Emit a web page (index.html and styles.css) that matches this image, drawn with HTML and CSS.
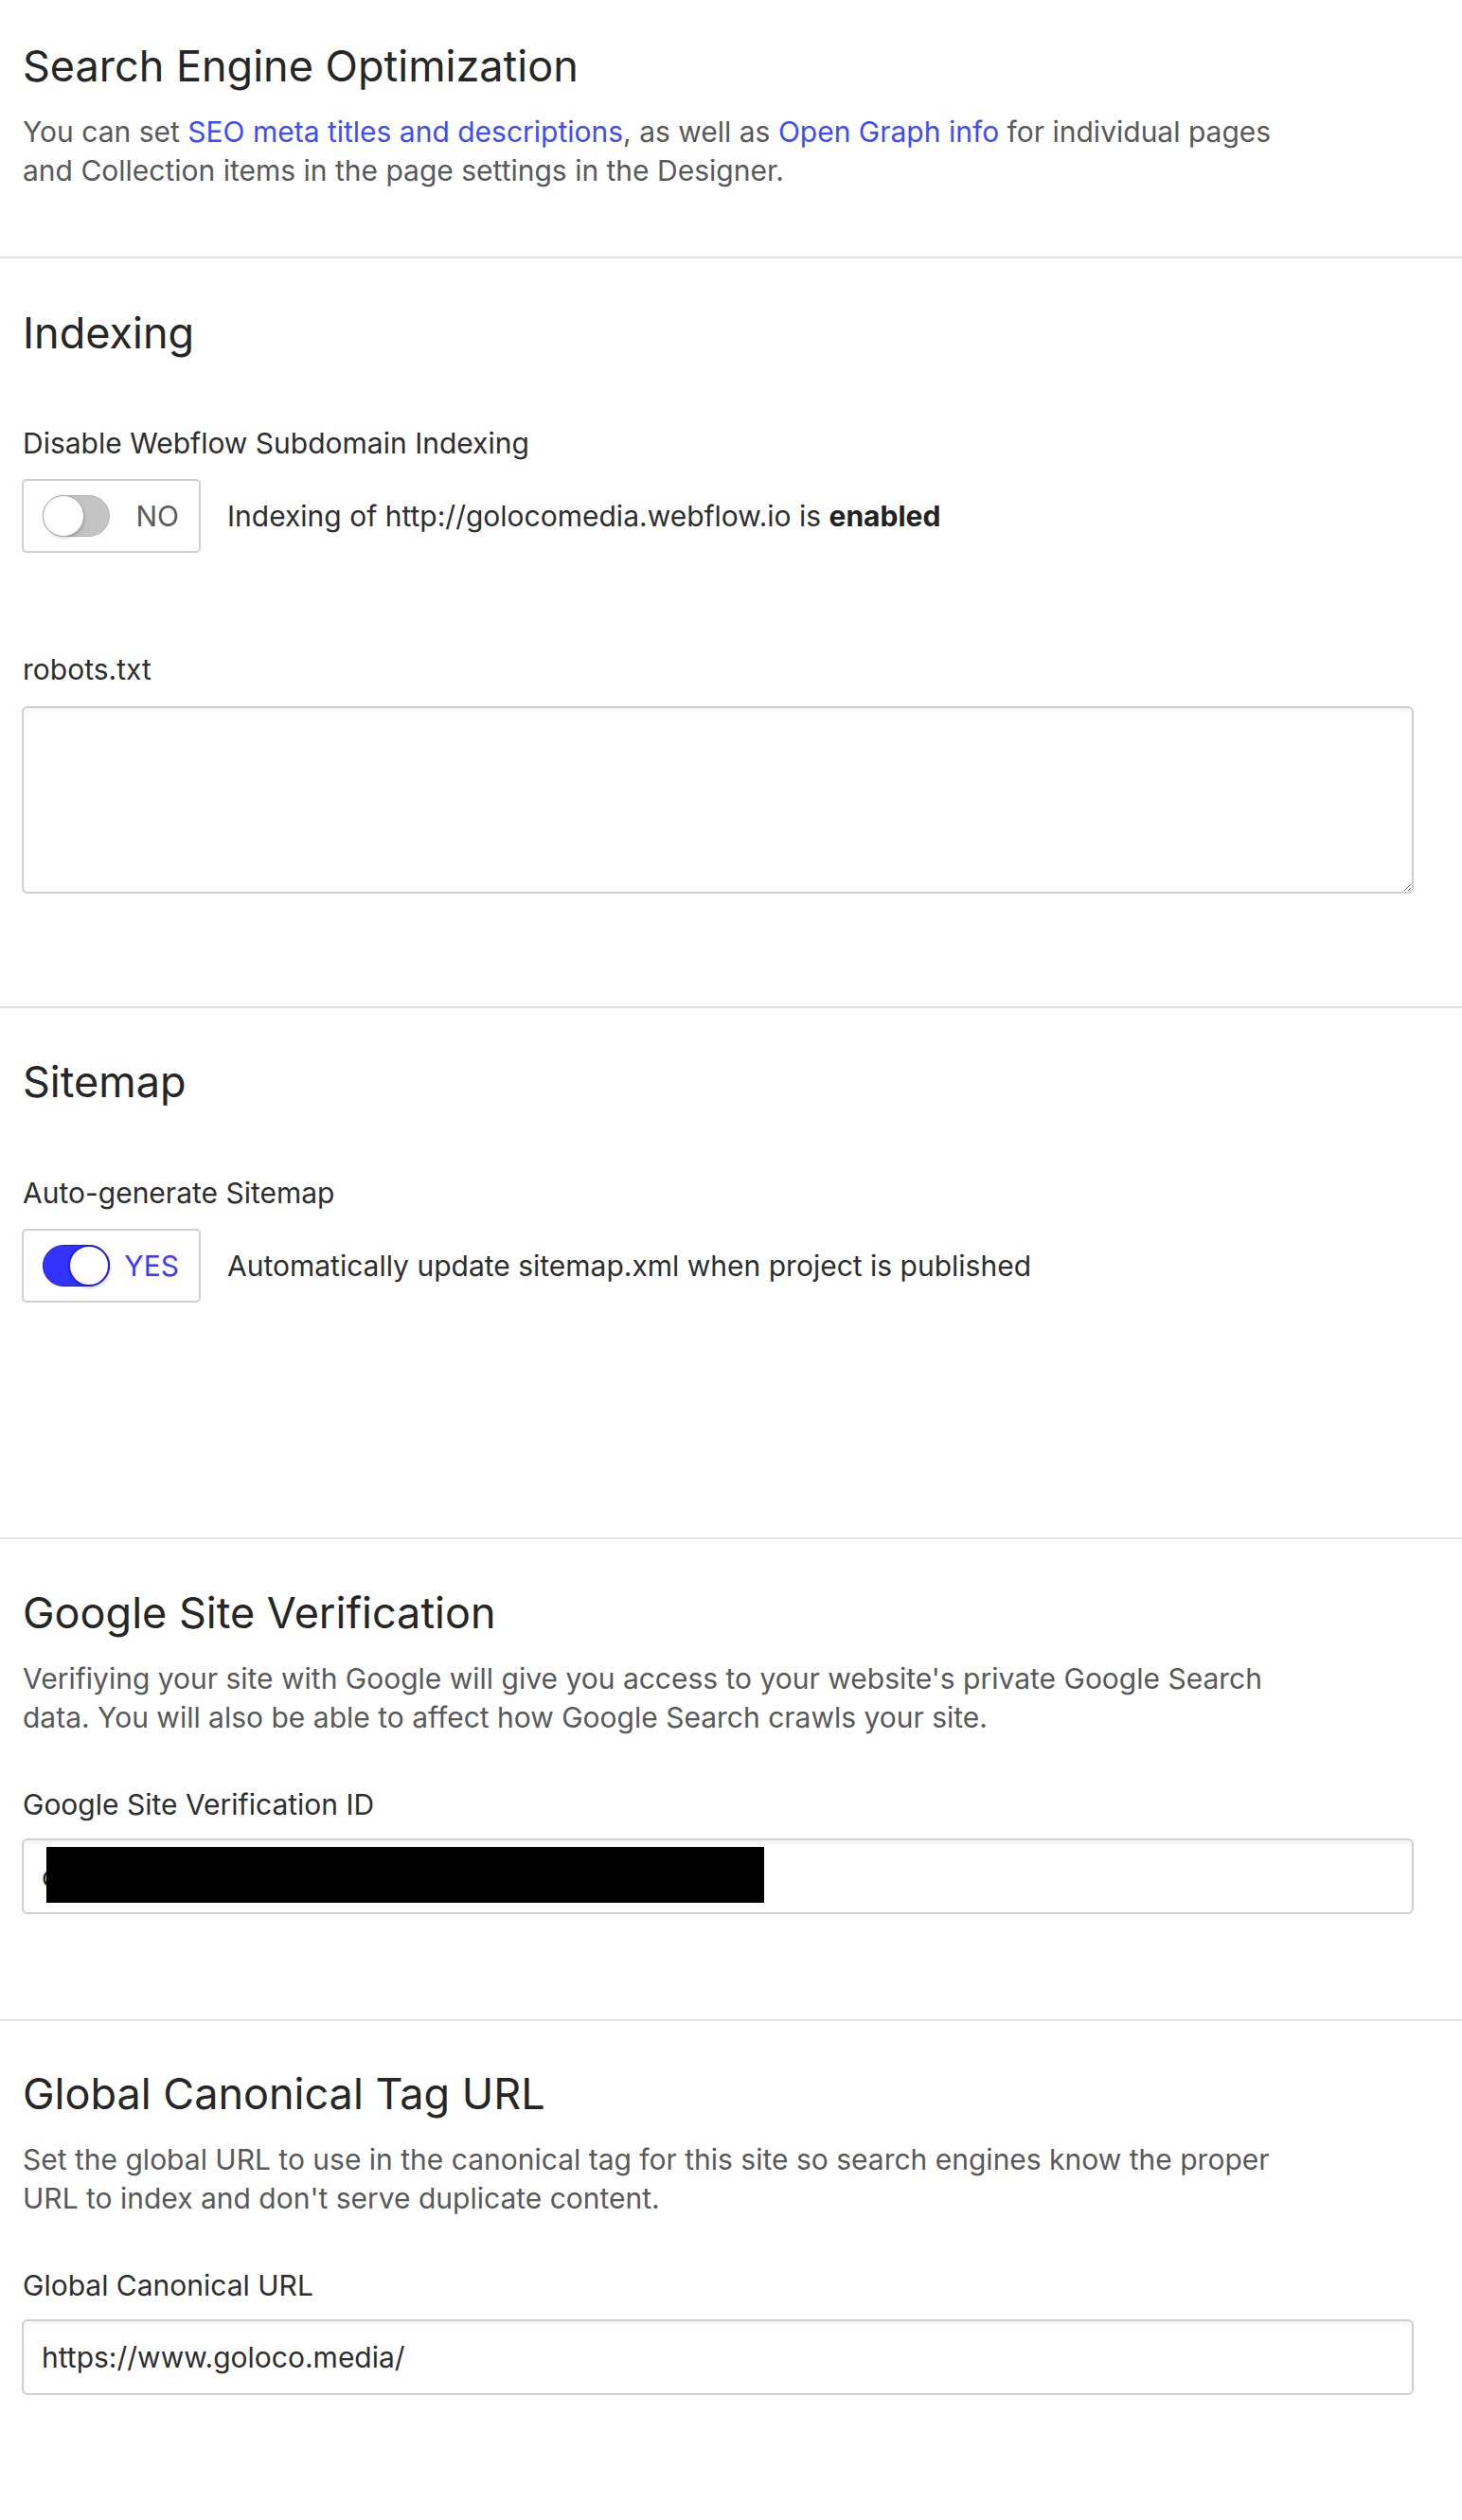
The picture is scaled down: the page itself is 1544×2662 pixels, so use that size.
FILE: index.html
```html
<!DOCTYPE html>
<html lang="en">
<head>
<meta charset="utf-8">
<title>SEO Settings</title>
<link rel="stylesheet" href="styles.css">
</head>
<body>
<main class="page">
  <section class="section section-first">
    <h1 class="heading">Search Engine Optimization</h1>
    <p class="desc">You can set <a class="link" href="#">SEO meta titles and descriptions</a>, as well as <a class="link" href="#">Open Graph info</a> for individual pages and Collection items in the page settings in the Designer.</p>
  </section>

  <section class="section section-indexing">
    <h2 class="heading">Indexing</h2>
    <div class="field">
      <label class="label">Disable Webflow Subdomain Indexing</label>
      <div class="toggle-row">
        <div class="toggle">
          <span class="track off"><span class="knob"></span></span>
          <span class="toggle-text">NO</span>
        </div>
        <span class="row-text">Indexing of http://golocomedia.webflow.io is <strong>enabled</strong></span>
      </div>
    </div>
    <div class="field field-robots">
      <label class="label">robots.txt</label>
      <textarea class="textarea"></textarea>
    </div>
  </section>

  <section class="section section-sitemap">
    <h2 class="heading">Sitemap</h2>
    <div class="field field-sitemap">
      <label class="label">Auto-generate Sitemap</label>
      <div class="toggle-row">
        <div class="toggle">
          <span class="track on"><span class="knob"></span></span>
          <span class="toggle-text on-text">YES</span>
        </div>
        <span class="row-text">Automatically update sitemap.xml when project is published</span>
      </div>
    </div>
  </section>

  <section class="section section-google">
    <h2 class="heading">Google Site Verification</h2>
    <p class="desc">Verifiying your site with Google will give you access to your website's private Google Search data. You will also be able to affect how Google Search crawls your site.</p>
    <div class="field field-after-desc">
      <label class="label">Google Site Verification ID</label>
      <div class="input-wrap">
        <input class="input" type="text" value="c">
        <span class="redact"></span>
      </div>
    </div>
  </section>

  <section class="section section-canonical">
    <h2 class="heading">Global Canonical Tag URL</h2>
    <p class="desc">Set the global URL to use in the canonical tag for this site so search engines know the proper URL to index and don't serve duplicate content.</p>
    <div class="field field-after-desc">
      <label class="label">Global Canonical URL</label>
      <div class="input-wrap">
        <input class="input" type="text" value="https://www.goloco.media/">
      </div>
    </div>
  </section>
</main>
</body>
</html>
```

FILE: styles.css
```css
* { box-sizing: border-box; }

html, body {
  margin: 0;
  padding: 0;
  background: #ffffff;
}

body {
  font-family: Inter, "Noto Sans", "Liberation Sans", sans-serif;
  font-size: 30px;
  line-height: 41px;
  color: #2e2e2e;
}

.page {
  display: flex;
  flex-direction: column;
}

.section {
  padding: 52px 24px 0 24px;
  border-bottom: 2px solid #e4e4e4;
  display: flex;
  flex-direction: column;
}

.section-first {
  padding-top: 43px;
  padding-bottom: 70px;
}

.section-indexing { padding-bottom: 119px; }
.section-sitemap { padding-top: 51px; padding-bottom: 248px; }
.section-google { padding-top: 51px; padding-bottom: 111px; }
.section-canonical { padding-top: 50px; border-bottom: none; padding-bottom: 131px; }

.heading {
  margin: 0;
  font-size: 45px;
  line-height: 53px;
  font-weight: 400;
  color: #262626;
}

.desc {
  margin: 23px 0 0 0;
  max-width: 1340px;
  color: #595959;
}

.link {
  color: #3d4bff;
  text-decoration: none;
}

.field {
  display: flex;
  flex-direction: column;
  margin-top: 70px;
}

.field-sitemap { margin-top: 71px; }
.field-robots { margin-top: 103px; }
.field-after-desc { margin-top: 51px; }

.label {
  display: block;
  color: #2e2e2e;
  margin-bottom: 17px;
}

.field-robots .label { margin-bottom: 18px; }
.field-after-desc .label { margin-bottom: 15px; }

.toggle-row {
  display: flex;
  align-items: center;
  gap: 28px;
}

.toggle {
  width: 189px;
  height: 78px;
  margin-left: -1px;
  border: 2px solid #d0d0d0;
  border-radius: 5px;
  display: flex;
  align-items: center;
  justify-content: space-between;
  padding: 0 21px 0 20px;
}

.track {
  position: relative;
  width: 71px;
  height: 44px;
  border-radius: 22px;
  display: block;
}

.track.off {
  background: #c4c4c4;
  border: 1px solid #b4b4b4;
}

.track.on {
  background: #3333ff;
  border: 1px solid #1a1ae6;
}

.knob {
  position: absolute;
  top: -1px;
  width: 44px;
  height: 44px;
  border-radius: 50%;
  background: #ffffff;
}

.track.off .knob {
  left: -1px;
  border: 1.5px solid #a8a8a8;
  box-shadow: 1px 2px 3px rgba(0,0,0,0.15);
}

.track.on .knob {
  right: -1px;
  border: 2px solid #1f1fe8;
  box-shadow: 1px 2px 3px rgba(0,0,0,0.15);
}

.toggle-text {
  color: #5a5a5a;
}

.toggle-text.on-text { color: #3b3bff; }

.row-text {
  color: #2e2e2e;
}

.row-text strong { font-weight: 700; color: #222; }

.textarea {
  display: block;
  width: 1470px;
  height: 198px;
  margin-left: -1px;
  border: 2px solid #cfcfcf;
  border-radius: 6px;
  box-shadow: inset 0 3px 4px rgba(0,0,0,0.05);
  background: #fff;
  font-family: inherit;
  font-size: 30px;
  resize: vertical;
  padding: 12px 18px;
}

.input-wrap {
  position: relative;
  width: 1470px;
  margin-left: -1px;
}

.input {
  display: block;
  width: 100%;
  height: 80px;
  border: 2px solid #cfcfcf;
  border-radius: 6px;
  box-shadow: inset 0 3px 4px rgba(0,0,0,0.05);
  background: #fff;
  font-family: inherit;
  font-size: 30px;
  color: #2e2e2e;
  padding: 0 19px;
  outline: none;
}

.redact {
  position: absolute;
  left: 26px;
  top: 9px;
  width: 758px;
  height: 59px;
  background: #000;
}
```
